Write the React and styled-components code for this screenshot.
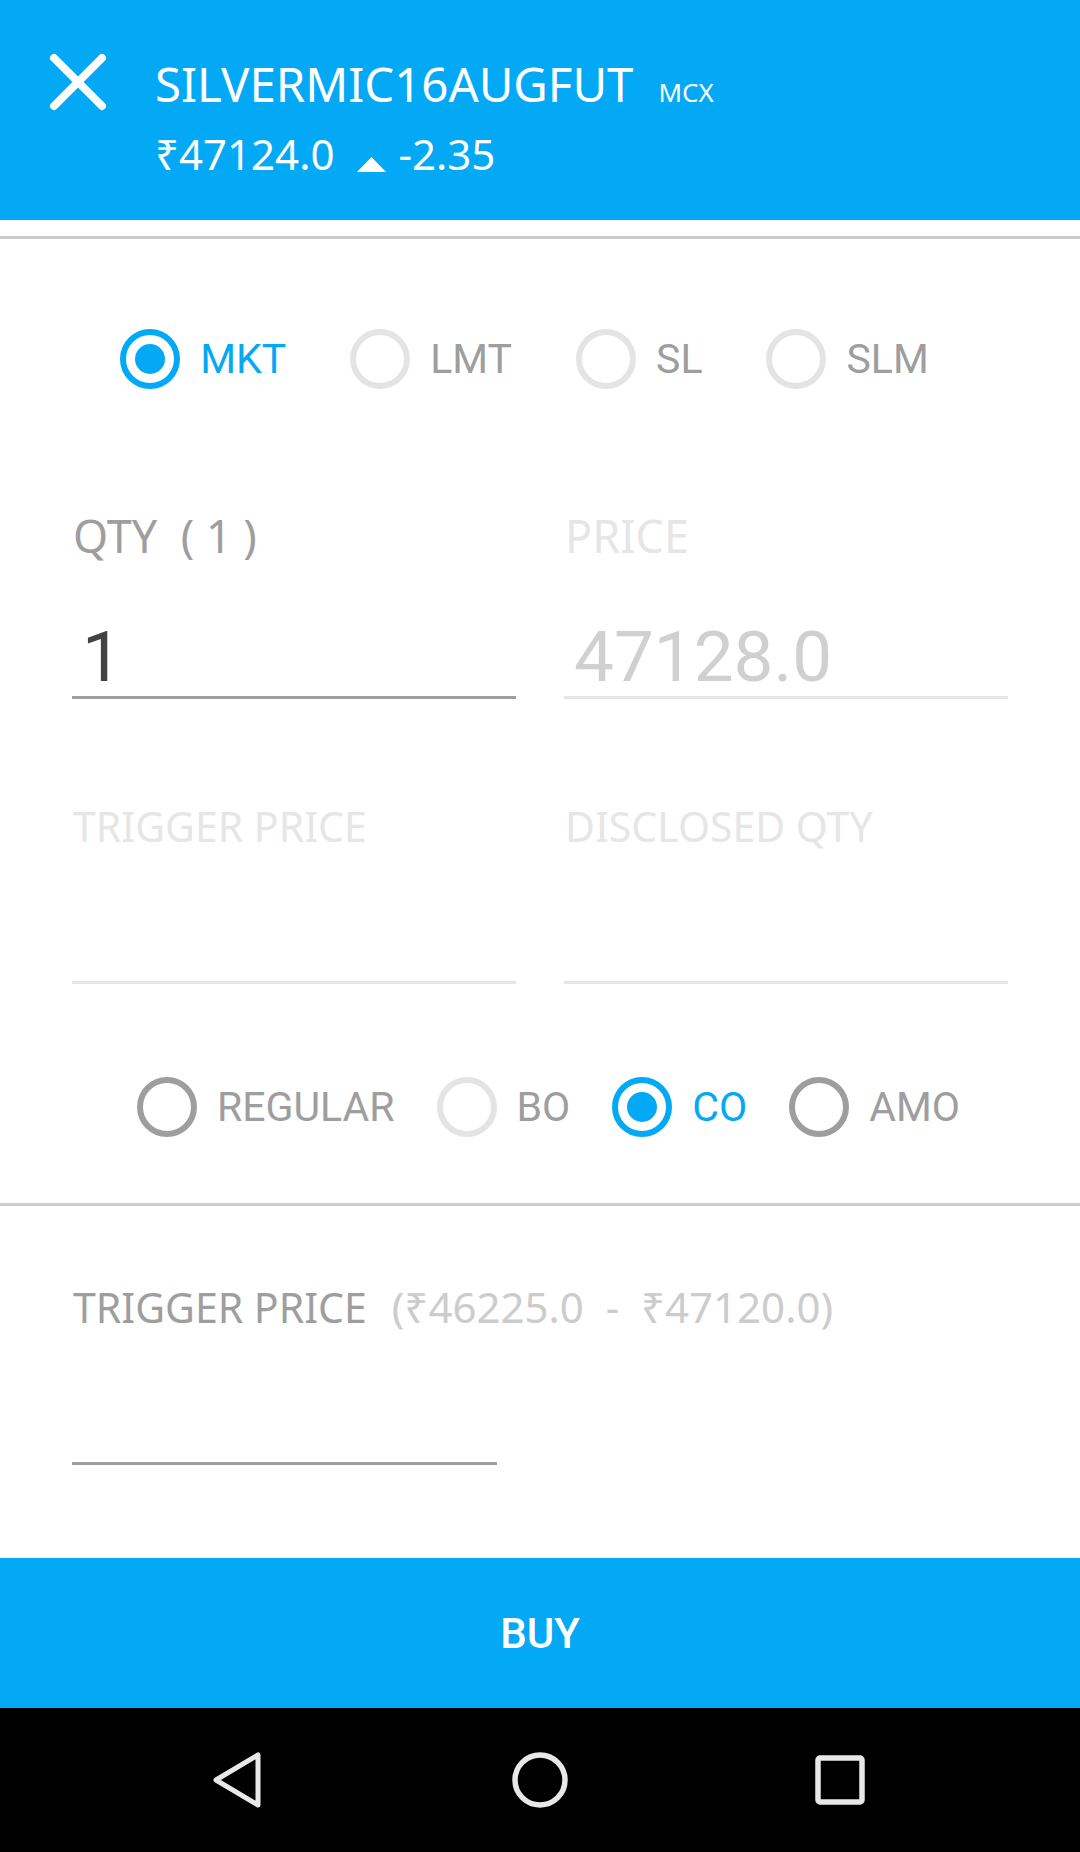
import React from 'react';
import styled, { createGlobalStyle } from 'styled-components';

const BLUE = '#03a9f4';

const GlobalStyle = createGlobalStyle`
  html, body {
    margin: 0;
    padding: 0;
    background: #ffffff;
  }
  * {
    box-sizing: border-box;
  }
`;

// --- LAYOUT ---

const Page = styled.div`
  min-height: 100vh;
  display: flex;
  flex-direction: column;
  background: #ffffff;
  font-family: "Noto Sans", "Open Sans", sans-serif;
`;

const Main = styled.main`
  flex: 1;
  display: flex;
  flex-direction: column;
`;

// --- HEADER ---

const Header = styled.header`
  height: 220px;
  background: ${BLUE};
  display: flex;
  align-items: flex-start;
  padding: 52px 0 0 48px;
`;

const CloseButton = styled.button`
  width: 60px;
  height: 60px;
  padding: 0;
  border: none;
  background: transparent;
  display: flex;
`;

const TitleBlock = styled.div`
  margin: 4px 0 0 47px;
  color: #ffffff;
`;

const Title = styled.div`
  font-size: 47.4px;
  line-height: 56px;
  white-space: nowrap;
`;

const Exchange = styled.span`
  font-size: 26px;
  margin-left: 25px;
`;

const PriceLine = styled.div`
  margin-top: 9px;
  font-size: 42px;
  line-height: 50px;
  white-space: nowrap;
`;

const ChangeArrow = styled.svg`
  width: 29px;
  height: 15px;
  margin: 0 12px 0 23px;
  vertical-align: -2px;
`;

const Separator = styled.div`
  height: 3px;
  background: #cccccc;
  margin-top: ${({ $top }) => $top || 0}px;
`;

// --- RADIO GROUPS ---

const RadioRow = styled.div`
  display: flex;
  justify-content: center;
  align-items: center;
  gap: ${({ $gap }) => $gap}px;
  margin-top: ${({ $top }) => $top}px;
  padding-left: ${({ $shift }) => ($shift > 0 ? $shift : 0)}px;
  padding-right: ${({ $shift }) => ($shift < 0 ? -$shift : 0)}px;
`;

const RadioLabel = styled.label`
  display: flex;
  align-items: center;
  gap: 20px;
  font-family: Roboto, "Noto Sans", sans-serif;
  font-size: 41px;
  line-height: 42px;
  color: ${({ $checked }) => ($checked ? BLUE : '#9e9e9e')};
  white-space: nowrap;

  input {
    display: none;
  }
`;

const RadioRing = styled.span`
  width: 60px;
  height: 60px;
  border-radius: 50%;
  border: 6px solid
    ${({ $checked, $strong }) => ($checked ? BLUE : $strong ? '#9e9e9e' : '#e4e4e4')};
  display: flex;
  align-items: center;
  justify-content: center;

  &::after {
    content: "";
    width: 30px;
    height: 30px;
    border-radius: 50%;
    background: ${({ $checked }) => ($checked ? BLUE : 'transparent')};
  }
`;

// --- FORM ---

const FormGrid = styled.div`
  display: grid;
  grid-template-columns: 1fr 1fr;
  column-gap: 48px;
  row-gap: 97px;
  padding: 0 72px;
  margin-top: 117px;
`;

const Field = styled.div`
  display: flex;
  flex-direction: column;
`;

const FieldLabel = styled.div`
  font-size: ${({ $small }) => ($small ? 41 : 45)}px;
  line-height: 60px;
  margin-bottom: ${({ $small }) => ($small ? 46 : 51)}px;
  padding-left: 1px;
  color: ${({ $active }) => ($active ? '#9e9e9e' : '#e6e6e6')};
  white-space: pre;
`;

const Range = styled.span`
  color: #cccccc;
  font-size: 42px;
  margin-left: 25px;
`;

const TextInput = styled.input`
  width: ${({ $width }) => ($width ? `${$width}px` : '100%')};
  height: 82px;
  padding: 0 0 0 10px;
  border: none;
  border-bottom: 3px solid ${({ $active }) => ($active ? '#9e9e9e' : '#e6e6e6')};
  border-radius: 0;
  outline: none;
  background: transparent;
  font-family: Roboto, sans-serif;
  font-size: 71px;
  color: #424242;

  &:disabled {
    color: #d0d0d0;
    -webkit-text-fill-color: #d0d0d0;
    opacity: 1;
  }
`;

const TriggerSection = styled.div`
  padding: 71px 72px 0;
  display: flex;
  flex-direction: column;
`;

// --- BOTTOM ---

const BuyButton = styled.button`
  height: 150px;
  width: 100%;
  border: none;
  background: ${BLUE};
  color: #ffffff;
  font-family: Roboto, sans-serif;
  font-weight: 500;
  font-size: 42px;
`;

const NavBar = styled.nav`
  height: 144px;
  background: #000000;
  display: flex;
  justify-content: center;
  align-items: center;
  gap: 244px;
`;

const NavIcon = styled.svg`
  width: 56px;
  height: 56px;
`;

// --- DATA ---

const orderTypes = [
  { label: 'MKT', checked: true },
  { label: 'LMT' },
  { label: 'SL' },
  { label: 'SLM' },
];

const productTypes = [
  { label: 'REGULAR', strong: true },
  { label: 'BO' },
  { label: 'CO', checked: true },
  { label: 'AMO', strong: true },
];

const Radio = ({ option, name }) => (
  <RadioLabel $checked={option.checked}>
    <input type="radio" name={name} defaultChecked={option.checked} />
    <RadioRing $checked={option.checked} $strong={option.strong} />
    {option.label}
  </RadioLabel>
);

export default function App() {
  return (
    <Page>
      <GlobalStyle />
      <Header>
        <CloseButton aria-label="close">
          <svg width="60" height="60" viewBox="0 0 60 60">
            <path d="M6 6 L54 54 M54 6 L6 54" stroke="#ffffff" strokeWidth="8" strokeLinecap="round" fill="none" />
          </svg>
        </CloseButton>
        <TitleBlock>
          <Title>
            SILVERMIC16AUGFUT<Exchange>MCX</Exchange>
          </Title>
          <PriceLine>
            ₹47124.0
            <ChangeArrow viewBox="0 0 29 15">
              <path d="M14.5 0 L29 15 L0 15 Z" fill="#ffffff" />
            </ChangeArrow>
            -2.35
          </PriceLine>
        </TitleBlock>
      </Header>
      <Separator $top={16} />

      <Main>
        <RadioRow $gap={64} $top={90} $shift={-31}>
          {orderTypes.map((o) => (
            <Radio key={o.label} option={o} name="orderType" />
          ))}
        </RadioRow>

        <FormGrid>
          <Field>
            <FieldLabel $active>QTY  ( 1 )</FieldLabel>
            <TextInput $active defaultValue="1" />
          </Field>
          <Field>
            <FieldLabel>PRICE</FieldLabel>
            <TextInput disabled defaultValue="47128.0" />
          </Field>
          <Field>
            <FieldLabel $small>TRIGGER PRICE</FieldLabel>
            <TextInput disabled />
          </Field>
          <Field>
            <FieldLabel $small>DISCLOSED QTY</FieldLabel>
            <TextInput disabled />
          </Field>
        </FormGrid>

        <RadioRow $gap={42} $top={93} $shift={17}>
          {productTypes.map((o) => (
            <Radio key={o.label} option={o} name="productType" />
          ))}
        </RadioRow>

        <Separator $top={66} />

        <TriggerSection>
          <FieldLabel $active $small>
            TRIGGER PRICE<Range>(₹46225.0  -  ₹47120.0)</Range>
          </FieldLabel>
          <TextInput $active $width={425} />
        </TriggerSection>
      </Main>

      <BuyButton>BUY</BuyButton>

      <NavBar>
        <NavIcon viewBox="0 0 56 56">
          <path d="M46 3 L46 53 L4 28 Z" fill="none" stroke="#e8e8e8" strokeWidth="5" strokeLinejoin="round" />
        </NavIcon>
        <NavIcon viewBox="0 0 56 56">
          <circle cx="28" cy="28" r="25" fill="none" stroke="#e8e8e8" strokeWidth="5.5" />
        </NavIcon>
        <NavIcon viewBox="0 0 56 56">
          <rect x="6" y="6" width="44" height="44" rx="2" fill="none" stroke="#e8e8e8" strokeWidth="5.5" />
        </NavIcon>
      </NavBar>
    </Page>
  );
}
